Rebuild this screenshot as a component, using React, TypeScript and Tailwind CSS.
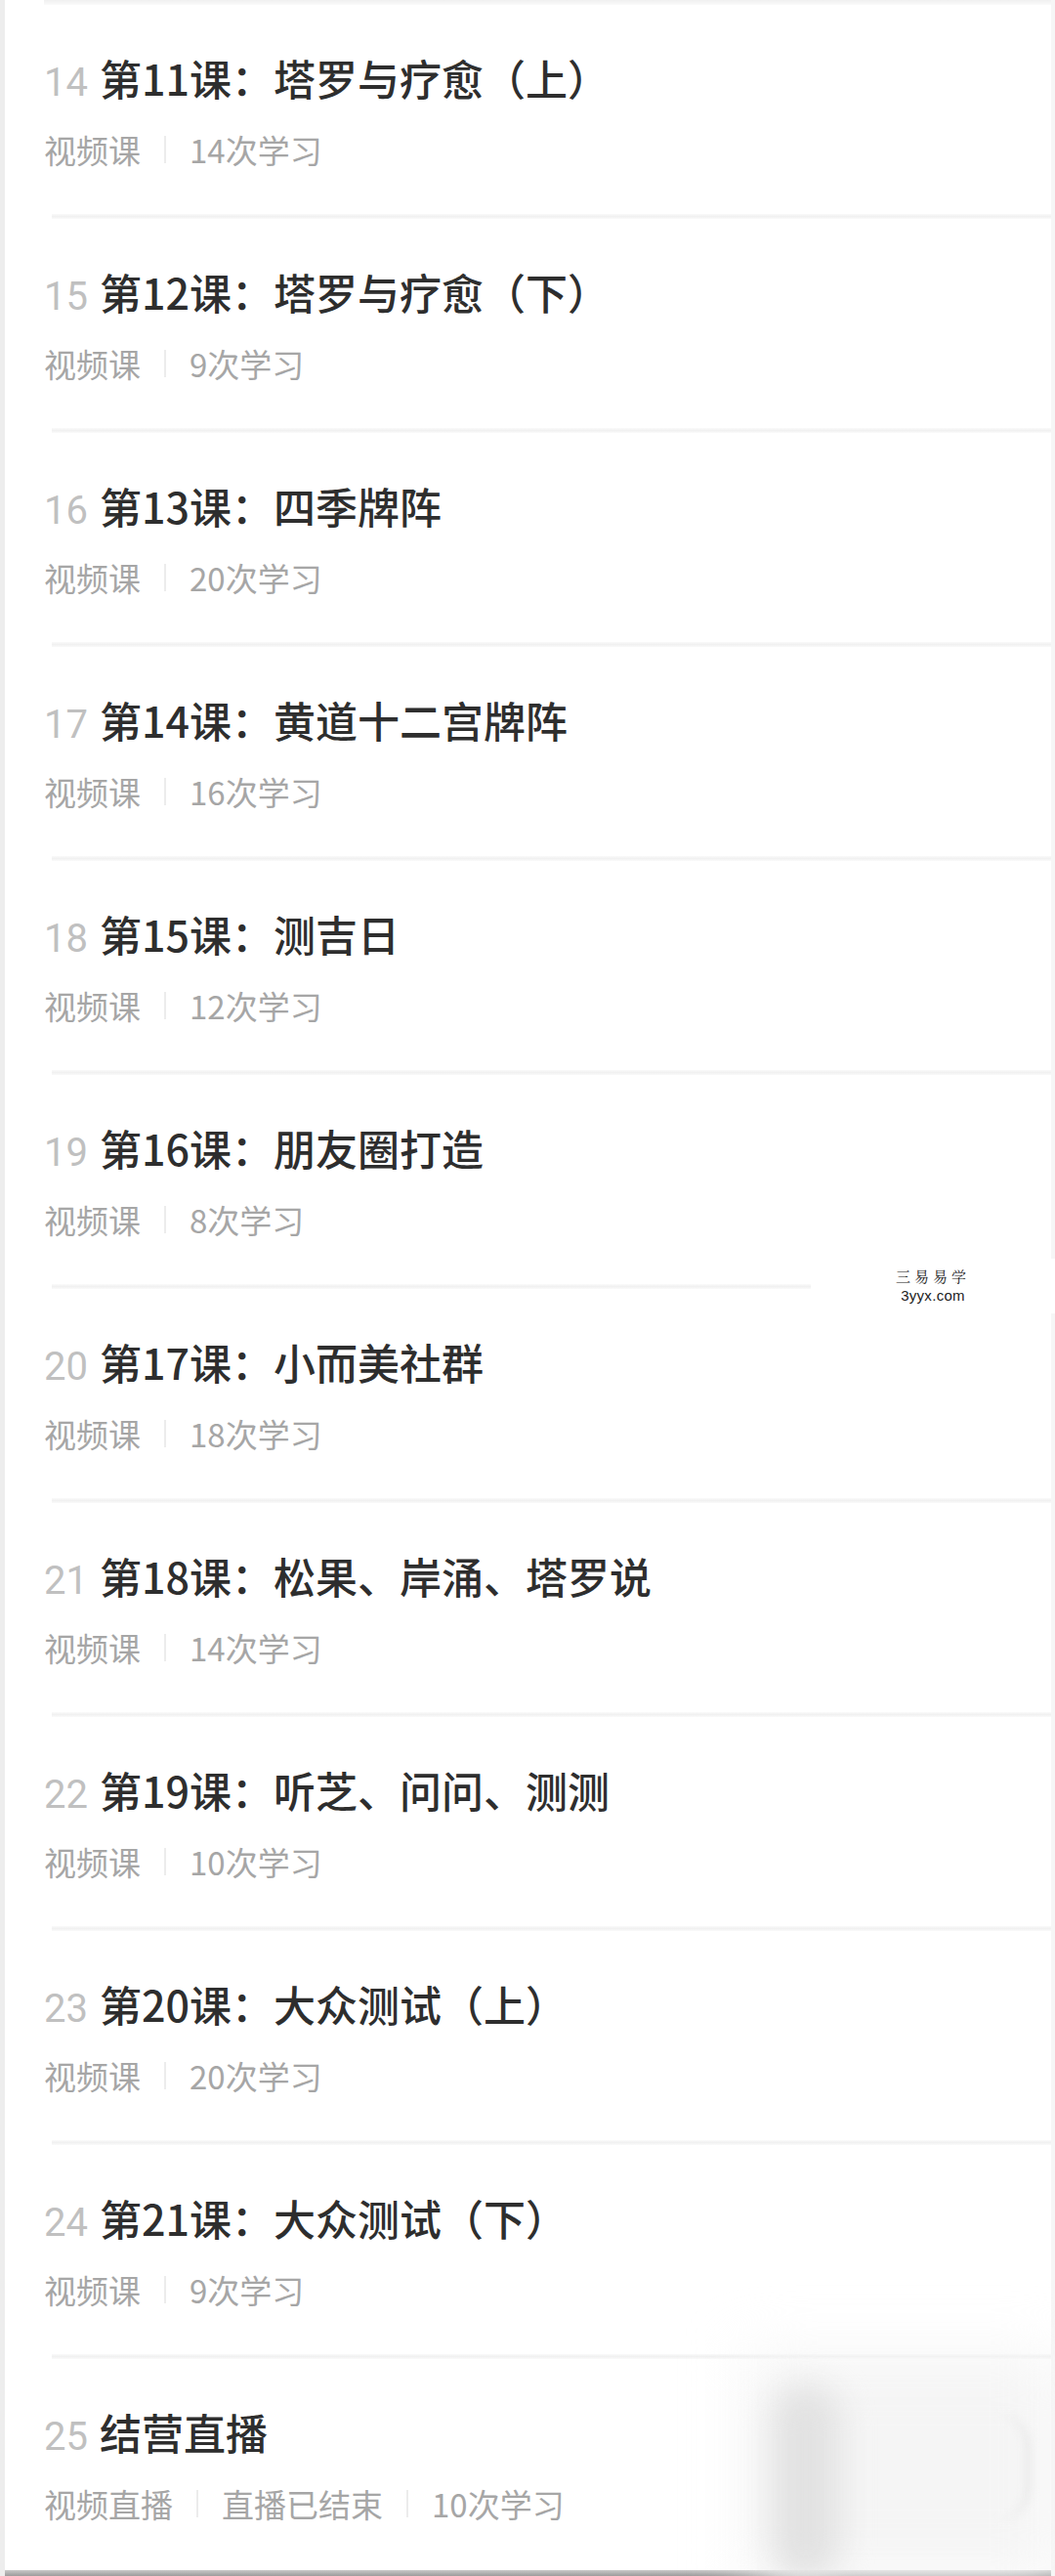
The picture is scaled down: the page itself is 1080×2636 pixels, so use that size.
import React from 'react';

interface Lesson {
  no: number;
  title: string;
  meta: string[];
}

const lessons: Lesson[] = [
  { no: 14, title: '第11课：塔罗与疗愈（上）', meta: ['视频课', '14次学习'] },
  { no: 15, title: '第12课：塔罗与疗愈（下）', meta: ['视频课', '9次学习'] },
  { no: 16, title: '第13课：四季牌阵', meta: ['视频课', '20次学习'] },
  { no: 17, title: '第14课：黄道十二宫牌阵', meta: ['视频课', '16次学习'] },
  { no: 18, title: '第15课：测吉日', meta: ['视频课', '12次学习'] },
  { no: 19, title: '第16课：朋友圈打造', meta: ['视频课', '8次学习'] },
  { no: 20, title: '第17课：小而美社群', meta: ['视频课', '18次学习'] },
  { no: 21, title: '第18课：松果、岸涌、塔罗说', meta: ['视频课', '14次学习'] },
  { no: 22, title: '第19课：听芝、问问、测测', meta: ['视频课', '10次学习'] },
  { no: 23, title: '第20课：大众测试（上）', meta: ['视频课', '20次学习'] },
  { no: 24, title: '第21课：大众测试（下）', meta: ['视频课', '9次学习'] },
  { no: 25, title: '结营直播', meta: ['视频直播', '直播已结束', '10次学习'] },
];

function LessonRow({ lesson, last }: { lesson: Lesson; last: boolean }) {
  return (
    <div className={last ? 'h-[216px]' : 'h-[219px] flex flex-col'}>
      <div className="pl-[40px] pt-[50px]">
        {/* Title */}
        <div className="flex items-baseline h-[48px] gap-[12px]">
          <span className="text-[40px] text-[#c0c0c0] font-['Roboto',sans-serif] leading-[48px]">
            {lesson.no}
          </span>
          <span className="text-[43px] font-medium text-[#2e2e2e] font-['Noto_Sans_CJK_SC',sans-serif] leading-[48px]">
            {lesson.title}
          </span>
        </div>
        {/* Meta */}
        <div className="flex items-center h-[40px] mt-[30px]">
          {lesson.meta.map((m, i) => (
            <React.Fragment key={m}>
              {i > 0 && <span className="w-[2px] h-[28px] bg-[#ececec] mx-[24px]" />}
              <span className="text-[33px] text-[#a6a6a6] font-['Noto_Sans_CJK_SC',sans-serif] leading-none">
                {m}
              </span>
            </React.Fragment>
          ))}
        </div>
      </div>
      {!last && (
        <div className="mt-auto ml-[48px] h-[5px] bg-gradient-to-b from-[#fafafa] via-[#f1f1f1] to-[#fafafa]" />
      )}
    </div>
  );
}

export default function App() {
  return (
    <div className="relative w-[1080px] h-[2636px] bg-white overflow-hidden border-l-[5px] border-[#ededed]">
      {/* top separator from previous row */}
      <div className="ml-[40px] h-[5px] bg-gradient-to-b from-[#f0f0f0] to-[#fafafa]" />

      {lessons.map((l, i) => (
        <LessonRow key={l.no} lesson={l} last={i === lessons.length - 1} />
      ))}

      {/* bottom bar */}
      <div className="absolute left-0 right-0 bottom-0 h-[6px] bg-gradient-to-b from-[#c8c8c8] to-[#9c9c9c]" />

      {/* right edge */}
      <div className="absolute top-0 bottom-0 right-0 w-[4px] bg-[#f6f6f6]" />

      {/* watermark */}
      <div className="absolute left-[825px] top-[1288px] w-[250px] h-[56px] bg-white flex flex-col items-center justify-center">
        <span className="text-[15px] leading-[20px] tracking-[4px] text-[#222] font-['Noto_Serif_CJK_SC','Noto_Sans_CJK_SC',serif]">
          三易易学
        </span>
        <span className="text-[15px] leading-[20px] tracking-[0.3px] text-[#222] font-['Liberation_Sans',sans-serif]">
          3yyx.com
        </span>
      </div>

      {/* blurry smudge bottom right */}
      <div className="absolute left-[760px] top-[2410px] w-[320px] h-[230px] bg-[#f5f5f5] blur-[30px]" />
      <div className="absolute left-[785px] top-[2440px] w-[70px] h-[200px] bg-[#e2e2e2] blur-[16px] rounded-full" />
      <div className="absolute left-[980px] top-[2470px] w-[70px] h-[110px] border-r-[6px] border-[#e8e8e8] rounded-full blur-[4px]" />
    </div>
  );
}
